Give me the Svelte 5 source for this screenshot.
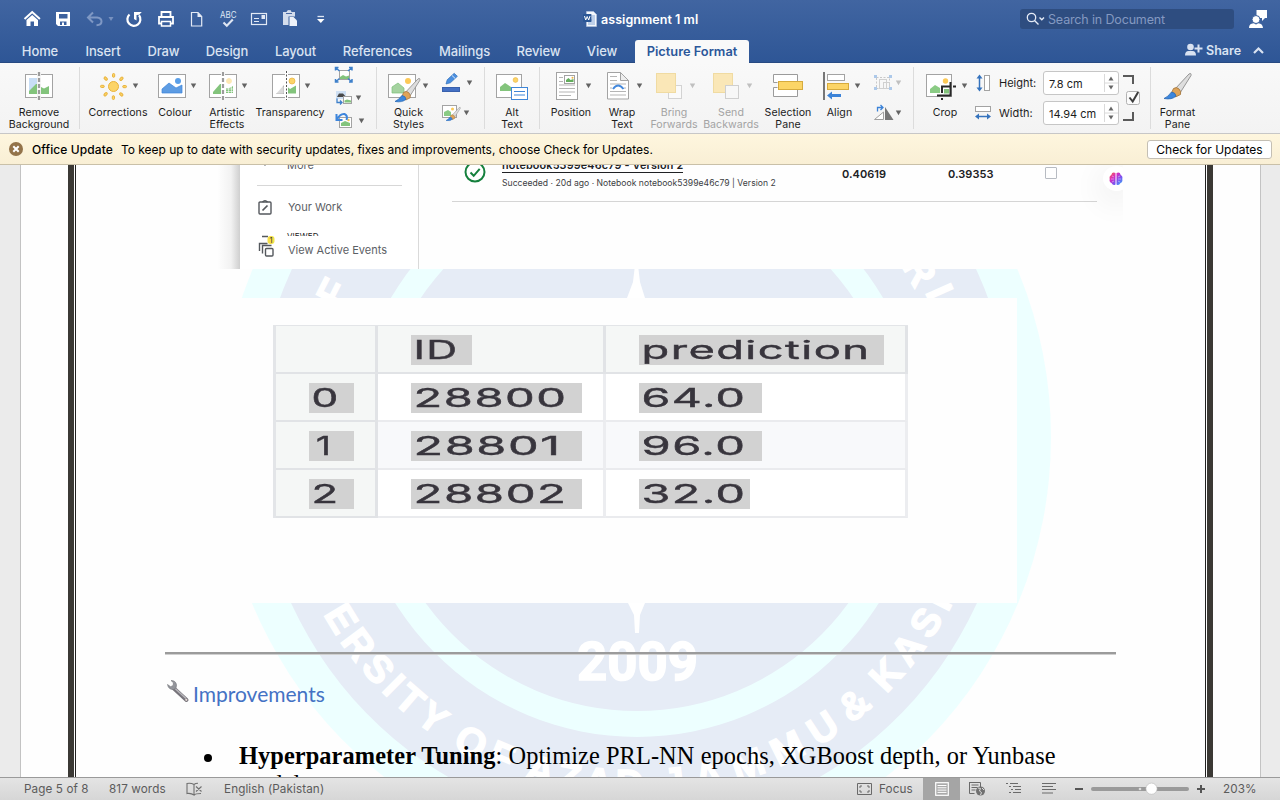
<script>
  const tabs = [
    ['Home', 36], ['Insert', 36], ['Draw', 31], ['Design', 42], ['Layout', 41],
    ['References', 69], ['Mailings', 51], ['Review', 43], ['View', 30]
  ];
  const rows = [
    [['', 0, 0], ['ID', 61, 45], ['prediction', 245, 229]],
    [['0', 45, 28], ['28800', 171, 154], ['64.0', 123, 105]],
    [['1', 45, 16], ['28801', 171, 148], ['96.0', 123, 105]],
    [['2', 45, 28], ['28802', 171, 154], ['32.0', 111, 105]]
  ];
</script>

{#snippet arrow(x, y, dim = false)}
  <path d="M{x - 2.7} {y - 2.4}h5.400l-2.700 4.600z" fill={dim ? '#c0c0c0' : '#636363'} />
{/snippet}

{#snippet frame(x, y, w, h)}
  <rect x={x + 0.5} y={y + 0.5} width={w - 1} height={h - 1} fill="#fff" stroke="#a3a3a3" />
{/snippet}

{#snippet brush(x, y, s)}
  <g transform="translate({x} {y}) scale({s})">
    <path d="M11 16L25 1q2.500-1.500 2 1.500L16 20z" fill="#dedede" stroke="#8b8b8b" stroke-width=".9" />
    <path d="M9.500 15.500q3-2 5.500.5t1.500 5.500l-5 2.500-4-4z" fill="#dfa458" stroke="#a77a43" stroke-width=".9" />
    <path d="M7.500 19q4 .5 4.500 4-4 4-12 2.500 4-1.500 7.500-6.500z" fill="#3b86dd" stroke="#2867b3" stroke-width=".8" />
  </g>
{/snippet}

{#snippet cell(x, w, lines, icon, dim = false)}
  <button class="cell" class:dim style:width="{w}px">
    <svg width={w} height="44" viewBox="{x} 63 {w} 44">{@render icon()}</svg>
    {#each lines as line}<span>{line}</span>{/each}
  </button>
{/snippet}

{#snippet tool(x, w, label, icon)}
  <button class="tool" aria-label={label} style:width="{w}px">
    <svg width={w} height="38" viewBox="{x} 0 {w} 38">{@render icon()}</svg>
  </button>
{/snippet}

{#snippet iHome()}
  <path d="M24.500 19l7.700-7 7.700 7" fill="none" stroke="#fff" stroke-width="2" />
  <path d="M26.500 20l5.700-5 5.800 5v6h-4v-4.500h-3.500V26h-4z" fill="#fff" />
{/snippet}
{#snippet iSave()}
  <path d="M56 12h14v14H58l-2-2zM59 14v4.500h8.500V14zM60 21.500V25h2v-2.500h2V25h2.500v-3.500z" fill="#fff" fill-rule="evenodd" />
{/snippet}
{#snippet iUndo()}
  <path d="M93 12.500L88 17.500l5 5M88.500 17.500h8.500q4.500.5 4.500 4t-5 3.700" fill="none" stroke="#7f98c4" stroke-width="2" />
  <path d="M108.500 17h5l-2.500 4z" fill="#7891bf" />
{/snippet}
{#snippet iRedo()}
  <path d="M129.500 14.500a6.500 6.500 0 1 0 9.500 .8" fill="none" stroke="#fff" stroke-width="2.200" />
  <path d="M134 12h7.800l-2.600 2.700-2.700.3v5.500l-2.500-1.500z" fill="#fff" />
{/snippet}
{#snippet iPrint()}
  <path d="M161.500 17v-5h9v5M161.500 23.500H159v-6.500h14v6.500h-2.500" fill="none" stroke="#fff" stroke-width="1.800" />
  <path d="M161.500 21.500h9V26h-9z" fill="none" stroke="#fff" stroke-width="1.500" />
{/snippet}
{#snippet iDoc()}
  <path d="M191.500 12.500h6.500l3.700 4v9.500h-10.200z" fill="none" stroke="#e4eaf5" stroke-width="1.200" />
  <path d="M197.500 12v5h4.500z" fill="#e4eaf5" />
{/snippet}
{#snippet iAbc()}
  <text x="220" y="17.700" font-size="8.300" textLength="16.500" lengthAdjust="spacingAndGlyphs" fill="#dfe6f3">ABC</text>
  <path d="M223.500 22.500l3.300 3.300 6-6.300" fill="none" stroke="#dfe6f3" stroke-width="2.100" />
{/snippet}
{#snippet iMail()}
  <rect x="251.500" y="13.500" width="15" height="11" fill="none" stroke="#e2e9f5" stroke-width="1.200" />
  <path d="M254 18.500h5M254 21.500h5" stroke="#e2e9f5" />
  <path d="M261.500 15h3.500v4h-3.500z" fill="#e2e9f5" />
{/snippet}
{#snippet iPaste()}
  <path d="M283 12h3.500q1-2.500 3-1.800 1.500-.5 2 1.800H295v4.500h-6.500V25H283z" fill="#d4ddec" />
  <path d="M286 13.500h6" stroke="#4a69a2" />
  <path d="M289.500 17h4l3.500 3.500V26h-7.500z" fill="#eef2f9" />
{/snippet}
{#snippet iMore()}
  <path d="M317.500 16.500h6.500" stroke="#dfe6f3" stroke-width="1.300" /><path d="M317 19h7.500l-3.700 4z" fill="#fff" />
{/snippet}

{#snippet rRemove()}
  {@render frame(25, 74, 28, 24)}
  <path d="M29 78h8.500v8.500l-8.500 7z" fill="#c8def6" />
  <path d="M29 94v-3l7-7h2v10zM41 87l3 1.500 5-2.500v8h-8z" fill="#83c47c" />
  <path d="M39 72v28" stroke="#f6f6f6" stroke-width="4" /><path d="M39 72v28" stroke="#9c9c9c" stroke-width="2.200" stroke-dasharray="4 2" />
{/snippet}
{#snippet rCorrect()}
  <circle cx="113.500" cy="86.500" r="5" fill="#fcd468" stroke="#e9b33c" />
  {#each [0, 45, 90, 135, 180, 225, 270, 315] as a}
    <rect x="112.500" y="73.500" width="2.200" height="3.800" rx="1.100" fill="#fcd468" stroke="#e9b33c" transform="rotate({a} 113.500 86.500)" />
  {/each}
  {@render arrow(135.500, 86)}
{/snippet}
{#snippet rColour()}
  {@render frame(158, 74, 28, 24)}
  <path d="M162 93v-4l7-6 7 5 6-3v8z" fill="#5d9ce3" stroke="#3d85da" stroke-width=".7" /><circle cx="178" cy="81" r="3" fill="#5a9fe8" />
  {@render arrow(193.500, 86)}
{/snippet}
{#snippet rArtistic()}
  {@render frame(209, 74, 28, 24)}
  <path d="M213 94v-2l7-8h1.500v10z" fill="#83c47c" />
  <path d="M226 88q3 1 7-2v7h-7z" fill="#83c47c" /><path d="M225 89h9m-9 2.500h9M228.500 85v9m3-9v9" stroke="#fff" stroke-width=".6" />
  <circle cx="229" cy="81" r="2.700" fill="#fcd77a" /><path d="M226 80h6m-6 2h6M228 78v6m2-6v6" stroke="#fff" stroke-width=".5" />
  <path d="M223 72v28" stroke="#fff" stroke-width="4" /><path d="M223 72v28" stroke="#9c9c9c" stroke-width="2.200" stroke-dasharray="4 2" />
  {@render arrow(244.500, 86)}
{/snippet}
{#snippet rTrans()}
  {@render frame(272, 74, 28, 24)}
  <path d="M276 94l8-9v9z" fill="#b5b5b5" /><path d="M278 94v-3m2 3v-5m2 5v-8M276 92h8m-8-2h8m-8-2h8" stroke="#fff" stroke-width=".6" />
  <path d="M287.500 87l2.500 2 6-3.500v8h-8.500z" fill="#83c47c" /><circle cx="292" cy="81" r="3" fill="#fcd468" stroke="#e9b33c" stroke-width=".7" />
  <path d="M286.500 71v29" stroke="#fff" stroke-width="3" /><path d="M286.500 71v29" stroke="#555" stroke-width="1" stroke-dasharray="2 1.500" />
  {@render arrow(307.500, 86)}
{/snippet}
{#snippet rQuick()}
  {@render frame(388, 74, 28, 24)}
  <path d="M392 93v-6l6-4 6 5v5z" fill="#a5d3a0" stroke="#7dbf78" stroke-width=".7" /><circle cx="408" cy="81" r="3" fill="#fcc957" />
  {@render brush(395, 78, 0.92)}
  {@render arrow(425.500, 86)}
{/snippet}
{#snippet rAlt()}
  {@render frame(496, 74, 26, 24)}
  <path d="M500 91v-4l5-4 6 4v4z" fill="#83c47c" /><circle cx="515.500" cy="80" r="2.400" fill="#fcd468" stroke="#e9b33c" stroke-width=".6" />
  <rect x="511.500" y="87.500" width="16" height="12" fill="#fff" stroke="#3e86d8" /><path d="M514 91.500h11m-11 3.500h11" stroke="#3e86d8" />
{/snippet}
{#snippet rPosition()}
  {@render frame(556, 72, 22, 28)}
  <path d="M559 77.500h4m-4 4h4m-4 3.500h16m-16 3.500h16m-16 3.500h16m-16 3.500h12" stroke="#b5b5b5" />
  <rect x="564.500" y="75.500" width="10" height="8" fill="#fff" stroke="#a3a3a3" /><path d="M566 82v-2l2.500-2 2 2 3-1v3z" fill="#62ad5c" /><circle cx="572.500" cy="77.700" r="1" fill="#f3b73f" />
  {@render arrow(588.500, 86)}
{/snippet}
{#snippet rWrap()}
  <path d="M607.500 72.500h13l8 8v18.500h-21z" fill="#fff" stroke="#a3a3a3" /><path d="M620.500 72.500v8h8z" fill="#eee" stroke="#a3a3a3" />
  <path d="M610 76.500h7m-7 4h7m-7 3.500h16m-16 4h2m12 0h2m-16 3.500h16m-16 3.500h16" stroke="#b5b5b5" />
  <path d="M613 89q5-7 10.500 0" fill="none" stroke="#4388dc" stroke-width="2" />
  {@render arrow(639.500, 86)}
{/snippet}
{#snippet rBring()}
  <rect x="668.500" y="85.500" width="13" height="13" fill="#fafafa" stroke="#d3d3d3" />
  <rect x="656.500" y="73.500" width="19" height="19" fill="#fae7b7" stroke="#f0dba2" />
  {@render arrow(692.500, 86, true)}
{/snippet}
{#snippet rSend()}
  <rect x="713.500" y="73.500" width="19" height="19" fill="#fae7b7" stroke="#f0dba2" />
  <rect x="725.500" y="85.500" width="13" height="13" fill="#f7f7f7" stroke="#cfcfcf" />
  {@render arrow(749.500, 86, true)}
{/snippet}
{#snippet rSelect()}
  <path d="M773.500 80v-5.500h24V96.500h-24V90" fill="#fff" stroke="#9b9b9b" />
  <path d="M772.500 82.500h5v5h-5z" fill="#f7f7f7" /><path d="M773.500 80v2.500h4M773.500 90v-2.500h4" fill="none" stroke="#9b9b9b" />
  <path d="M796 82h3v7h-3z" fill="#f7f7f7" />
  <rect x="778.500" y="81.500" width="24" height="8" fill="#fcd567" stroke="#d6ab3e" />
{/snippet}
{#snippet rAlign()}
  <path d="M824 72v28" stroke="#777" stroke-width="2" />
  <rect x="827.500" y="74.500" width="17" height="6" fill="#fff" stroke="#a3a3a3" />
  <rect x="827.500" y="83.500" width="21" height="6" fill="#fcd567" stroke="#d6ab3e" />
  <path d="M827 95.500l5-4v2.500h9v3h-9v2.500z" fill="#3c83d8" />
  {@render arrow(857.500, 86)}
{/snippet}
{#snippet rCrop()}
  {@render frame(926, 74, 26, 23)}
  <path d="M930 93v-4l5-4 5 3v5z" fill="#8acb84" /><circle cx="945.500" cy="81" r="2.700" fill="#fcc957" />
  <path d="M941.500 95.500v-8.500H951v9z" fill="#fff" /><path d="M944 89h5v4.500h-5z" fill="#83c47c" />
  <path d="M942 93v-6.500h9M937 95.500h13.500V82M953 86.500h3M942 98v2" fill="none" stroke="#292929" stroke-width="2" />
  {@render arrow(964.500, 86)}
{/snippet}
{#snippet rFormat()}{@render brush(1164, 73, 1)}{/snippet}

<div class="app">
  <header>
    <div class="titlebar">
      {@render tool(20, 28, 'Home', iHome)}
      {@render tool(48, 30, 'Save', iSave)}
      {@render tool(78, 42, 'Undo', iUndo)}
      {@render tool(120, 30, 'Redo', iRedo)}
      {@render tool(150, 31, 'Print', iPrint)}
      {@render tool(181, 31, 'New', iDoc)}
      {@render tool(212, 31, 'Spelling', iAbc)}
      {@render tool(243, 32, 'Mail', iMail)}
      {@render tool(275, 30, 'Paste', iPaste)}
      {@render tool(305, 32, 'More', iMore)}
      <div class="title">
        <svg width="14" height="16" viewBox="0 0 14 16"><path d="M3.500.5h7l3 3v12h-10z" fill="#f4f7fc" stroke="#b9c8e2" stroke-width=".6" /><path d="M5 9h7m-7 2h7m-7 2h7M9 5h3m-3 2h3" stroke="#6c94cf" stroke-width=".8" /><rect y="3" width="8.500" height="8" rx=".8" fill="#2b5797" /><path d="M1.500 5l1.200 4L4.200 5.500 5.700 9 7 5" fill="none" stroke="#fff" stroke-width="1" /></svg>
        <b>assignment 1 ml</b>
      </div>
      <div class="search">
        <svg width="20" height="14" viewBox="0 0 20 14"><circle cx="5.500" cy="5.500" r="4.200" fill="none" stroke="#e5ebf6" stroke-width="1.300" /><path d="M8.500 8.500l4 4M13.500 5.500l2.300 2.200L18 5.500" fill="none" stroke="#e5ebf6" stroke-width="1.400" /></svg>
        <span>Search in Document</span>
      </div>
      <svg class="contact" width="19" height="20" viewBox="1249 9 19 20"><path d="M1256.500 10h10.500v8h-2l-3 3v-3h-5.500z" fill="#fff" /><circle cx="1256" cy="19.500" r="4" fill="#fff" stroke="#3b609d" /><path d="M1249 28q0-4.500 4.500-4.800l2.500 1.300 2.500-1.300q4 .3 4.500 4.800z" fill="#fff" /></svg>
    </div>
    <nav>
      {#each tabs as [name, w]}<span class="tab" style:width="{w}px">{name}</span>{/each}
      <span class="active">Picture Format</span>
      <span class="share">
        <svg width="18" height="14" viewBox="0 0 18 14"><circle cx="5.500" cy="4" r="3.300" fill="#d9e2f1" /><path d="M0 12.500Q0 8 3.500 8h4Q11 8 11 12.500z" fill="#d9e2f1" /><path d="M13.500 1.500v8M9.500 5.500h8" stroke="#d9e2f1" stroke-width="2" /></svg>
        <b>Share</b>
        <svg class="chev" width="11" height="7" viewBox="0 0 11 7"><path d="M1 6l4.500-4.500L10 6" fill="none" stroke="#d9e2f1" stroke-width="2.200" /></svg>
      </span>
    </nav>
  </header>

  <section class="ribbon">
    {@render cell(0, 78, ['Remove', 'Background'], rRemove)}
    <i class="sep"></i>
    {@render cell(80, 76, ['Corrections'], rCorrect)}
    {@render cell(156, 38, ['Colour'], rColour)}
    {@render cell(194, 66, ['Artistic', 'Effects'], rArtistic)}
    {@render cell(260, 60, ['Transparency'], rTrans)}
    <svg class="stack" width="56" height="70" viewBox="320 63 56 70">
      {@render frame(339, 70, 11, 10)}
      <path d="M340 79v-2l3-2 3 1.500 3-1v3.500z" fill="#83c47c" />
      <path d="M335.500 67.500l4 3.500m12.500-3.500l-4 3.500m-12.500 11l4-3.500M352 82l-4-3.500M335.500 70.500v-3h3M349 67.500h3v3M335.500 79v3h3M349 82h3v-3" fill="none" stroke="#3e80ca" stroke-width="1.500" />
      <rect x="336" y="91" width="10" height="8" fill="#cfe0f3" /><path d="M337 97l2-3.500h4l3 3.500z" fill="#494949" /><path d="M337 98.500v4h5m-2-2l2 2-2 2" fill="none" stroke="#3e80ca" stroke-width="1.300" />
      {@render frame(343, 96, 9, 8)}<path d="M344.500 102.500v-2l2.500-1 4 1v2z" fill="#83c47c" />
      {@render arrow(358.500, 98)}
      {@render frame(339, 117, 13, 11)}<path d="M341 126v-3l4-2 5 2v3z" fill="#83c47c" /><circle cx="348.500" cy="120" r="1.200" fill="#f6c24d" />
      <path d="M336.500 114v6h6M337 119.500q3-6 7.500-5.500 3.500 1.500 2 6" fill="none" stroke="#3e86dc" stroke-width="2" />
      {@render arrow(361.500, 121)}
    </svg>
    <i class="sep"></i>
    {@render cell(377, 63, ['Quick', 'Styles'], rQuick)}
    <svg class="stack" width="44" height="70" viewBox="440 63 44 70">
      <rect x="442.500" y="87.500" width="17" height="4" fill="#4470c4" stroke="#3961ad" />
      <path d="M446 84l1.200-4.200 7-6.500 3.200 3-7 6.500z" fill="#4b8fdf" stroke="#3471ba" stroke-width=".7" /><path d="M452 75.500l3.200 3" stroke="#fff" stroke-width=".8" />
      {@render arrow(469.500, 83)}
      {@render frame(442, 105, 15, 13)}<path d="M444 116v-4l4-2 3 2v4z" fill="#8acb84" /><circle cx="452.500" cy="109" r="1.500" fill="#fcc957" />
      {@render brush(446, 107, 0.53)}
      {@render arrow(466.500, 113)}
    </svg>
    <i class="sep"></i>
    {@render cell(485, 54, ['Alt', 'Text'], rAlt)}
    <i class="sep"></i>
    {@render cell(540, 62, ['Position'], rPosition)}
    {@render cell(602, 40, ['Wrap', 'Text'], rWrap)}
    {@render cell(642, 64, ['Bring', 'Forwards'], rBring, true)}
    {@render cell(706, 50, ['Send', 'Backwards'], rSend, true)}
    {@render cell(756, 64, ['Selection', 'Pane'], rSelect)}
    {@render cell(820, 39, ['Align'], rAlign)}
    <svg class="stack" width="54" height="70" viewBox="859 63 54 70">
      <rect x="876.500" y="77.500" width="13" height="11" fill="none" stroke="#c9c9c9" stroke-dasharray="2 1.500" /><rect x="879.500" y="79.500" width="7" height="9" fill="none" stroke="#d0d0d0" /><rect x="883.500" y="82.500" width="6" height="6" fill="none" stroke="#d0d0d0" />
      <path d="M874 75h3v3h-3zm15 0h3v3h-3zm-15 12h3v3h-3zm15 0h3v3h-3z" fill="#adc9ea" />
      {@render arrow(898.500, 83, true)}
      <path d="M874.500 119.500l9-7.500v7.500z" fill="#fff" stroke="#a0a0a0" /><path d="M885 107l8.500 13H885z" fill="#777" />
      <path d="M877.500 111.500v-4h5m-2-2.500l2.500 2.500-2.500 2.500" fill="none" stroke="#3c83d8" stroke-width="1.300" />
      {@render arrow(898.500, 113)}
    </svg>
    <i class="sep"></i>
    {@render cell(914, 62, ['Crop'], rCrop)}
    <div class="size">
      <svg width="18" height="18" viewBox="974 74 18 18"><rect x="984.500" y="75.500" width="5" height="15" fill="#fff" stroke="#a3a3a3" /><path d="M979.500 77v12" stroke="#3573bd" stroke-width="1.500" /><path d="M976.500 78.500l3-4 3 4zm0 9l3 4 3-4z" fill="#3573bd" /></svg>
      <span>Height:</span>
      <div class="field"><em>7.8 cm</em><svg width="14" height="22" viewBox="0 0 14 22"><path d="M.5 2v18M1 11h13" stroke="#dadada" /><path d="M4.500 8.500h5L7 4.500zm0 5h5L7 17.500z" fill="#666" /></svg></div>
      <svg width="18" height="18" viewBox="974 104 18 18"><rect x="975.500" y="106.500" width="15" height="5" fill="#fff" stroke="#a3a3a3" /><path d="M977 116.500h12" stroke="#3573bd" stroke-width="1.500" /><path d="M979 113.500l-4 3 4 3zm8 0l4 3-4 3z" fill="#3573bd" /></svg>
      <span>Width:</span>
      <div class="field"><em>14.94 cm</em><svg width="14" height="22" viewBox="0 0 14 22"><path d="M.5 2v18M1 11h13" stroke="#dadada" /><path d="M4.500 8.500h5L7 4.500zm0 5h5L7 17.500z" fill="#666" /></svg></div>
    </div>
    <svg class="stack" width="32" height="70" viewBox="1118 63 32 70">
      <path d="M1123 76h10v8M1123 120h10v-8" fill="none" stroke="#5a5a5a" stroke-width="2" />
      <rect x="1126.500" y="91.500" width="13" height="13" rx="2" fill="#fbfbfb" stroke="#b3b3b3" /><path d="M1129.500 97.500l3.200 4 5.500-9.500" fill="none" stroke="#3d3d3d" stroke-width="2" />
    </svg>
    <i class="sep"></i>
    {@render cell(1151, 53, ['Format', 'Pane'], rFormat)}
  </section>

  <section class="notice">
    <svg width="14" height="14" viewBox="0 0 14 14"><circle cx="7" cy="7" r="7" fill="#93734a" /><path d="M4.300 4.300l5.400 5.400m0-5.400L4.300 9.700" stroke="#fff" stroke-width="2" /></svg>
    <b>Office Update</b>
    <span>To keep up to date with security updates, fixes and improvements, choose Check for Updates.</span>
    <button>Check for Updates</button>
  </section>

  <main>
    <div class="page">
      <svg class="watermark" width="840" height="612" viewBox="215 165 840 612">
        <ellipse cx="635" cy="437" rx="416" ry="426" fill="#edffff" />
        <ellipse cx="634" cy="437" rx="379" ry="390" fill="#e6ecf6" />
        <ellipse cx="637" cy="447" rx="287" ry="290" fill="#edffff" />
        <ellipse cx="637" cy="447" rx="262" ry="264" fill="#e6ecf6" />
        <path id="lower" d="M278 440A357 357 0 0 0 992 440" fill="none" />
        <g class="ring">
          <text><textPath href="#lower" startOffset="182" textLength="167">ERSITY</textPath></text>
          <text><textPath href="#lower" startOffset="368" textLength="62">OF</textPath></text>
          <text><textPath href="#lower" startOffset="447" textLength="122">AZAD</textPath></text>
          <text><textPath href="#lower" startOffset="590" textLength="191">JAMMU</textPath></text>
          <text><textPath href="#lower" startOffset="793">&amp;</textPath></text>
          <text><textPath href="#lower" startOffset="839" textLength="130">KASH</textPath></text>
          <text transform="translate(339 309) rotate(-63)">F</text>
          <text transform="translate(901 265) rotate(60)">R</text>
          <text transform="translate(925 292) rotate(66)">I</text>
        </g>
        <text class="year" x="577" y="680" textLength="121" lengthAdjust="spacingAndGlyphs">2009</text>
        <path d="M628 603h17l-5 12-1 18h-4l-1-18zM627 298l6-16 2-17h3l2 17 5 16z" fill="#fff" />
      </svg>

      <div class="shot">
        <div class="shade"></div>
        <aside>
          <div class="more"><svg width="8" height="6" viewBox="0 0 8 6"><path d="M1 1l3 3 3-3" fill="none" stroke="#5f6368" stroke-width="1.300" /></svg><span>More</span></div>
          <div class="item"><svg width="14" height="15" viewBox="0 0 14 15"><rect x="1" y="2" width="12" height="12" rx="1" fill="none" stroke="#54585d" stroke-width="1.400" /><path d="M4.500 2q2.500-2.500 5 0M4.500 10.500l5-5" fill="none" stroke="#54585d" stroke-width="1.700" /></svg><span>Your Work</span></div>
          <div class="viewed"><span>VIEWED</span></div>
          <div class="item events"><svg width="17" height="24" viewBox="257 232 17 24"><path d="M261 235.500h6M258.500 250v-7.500h8M261.500 252.500v-8h9" fill="none" stroke="#54585d" stroke-width="1.400" /><rect x="264.500" y="247.500" width="7.500" height="7.500" rx="1" fill="#fff" stroke="#54585d" stroke-width="1.400" /><rect x="266.500" y="235" width="7" height="8" rx="3" fill="#f6e04a" /><text x="268.500" y="242" font-size="7.500" fill="#333">1</text></svg><span>View Active Events</span></div>
        </aside>
        <div class="run">
          <svg width="22" height="22" viewBox="0 0 22 22"><circle cx="11" cy="11" r="9.500" fill="#fff" stroke="#15803d" stroke-width="2" /><path d="M6.500 11.500l3.200 3.300 6-7" fill="none" stroke="#15803d" stroke-width="2" /></svg>
          <div class="names"><b>notebook5399e46c79 - Version 2</b><small>Succeeded · 20d ago · Notebook notebook5399e46c79 | Version 2</small></div>
          <strong class="private">0.40619</strong>
          <strong class="public">0.39353</strong>
          <i class="check"></i>
        </div>
        <div class="assist"><svg width="14" height="14" viewBox="0 0 14 14"><defs><linearGradient id="brain" x1="0" y1="0" x2="1" y2="1"><stop offset="0" stop-color="#ff6a3d" /><stop offset=".35" stop-color="#d52bc4" /><stop offset=".65" stop-color="#7557f3" /><stop offset="1" stop-color="#39b6f2" /></linearGradient></defs><path d="M6.500 1Q3-.5 2.300 3 0 4 .7 7 0 10 2.500 11q1.500 3 4 1.500zM7.500 1Q11-.5 11.700 3 14 4 13.300 7q.7 3-1.800 4-1.500 3-4 1.500z" fill="url(#brain)" /><path d="M2 7h3M3 4l2 1M3 10l2-1m7-2H9m2-3L9 5m2 5L9 9" stroke="#fff" stroke-width=".6" opacity=".7" /></svg></div>
      </div>

      <div class="figure">
        <div class="table">
          {#each rows as row, r}
            {#each row as [text, box, len], c}
              <div class="td" class:head={r === 0 || c === 0} class:odd={r === 2} class:first={c === 0}>
                {#if text}
                  <svg style:width="{box}px" height="30"><text x={text === '1' ? 7 : 2.5} y="24" textLength={len} lengthAdjust="spacingAndGlyphs">{text}</text></svg>
                {/if}
              </div>
            {/each}
          {/each}
        </div>
      </div>

      <hr />
      <h2>
        <svg width="24" height="25" viewBox="0 0 24 25"><path d="M8 9.500L20.500 21" stroke="#77747b" stroke-width="4" stroke-linecap="round" /><path d="M8 8.500L20 19.500" stroke="#b8b7bb" stroke-width="1.300" /><path d="M5 1.500q5 0 5.500 4.500.3 4-3 4.500-5 .3-6-5l3.200 2.200 2.500-1.300.2-2.600z" fill="#93959b" stroke="#74757b" stroke-width=".6" /><circle cx="20.300" cy="20.800" r="1.100" fill="#e8dcd7" /></svg>
        <span>Improvements</span>
      </h2>
      <ul><li><b>Hyperparameter Tuning</b>: Optimize PRL-NN epochs, XGBoost depth, or Yunbase<br />models</li></ul>
    </div>
  </main>

  <footer>
    <span class="pages">Page 5 of 8</span>
    <span class="words">817 words</span>
    <svg class="book" width="17" height="14" viewBox="0 0 17 14"><path d="M8 2.500Q5 .8 1 1.500v10q4-.7 7 1.500V2.500Q9.500 1.300 12 1.300M8 13q1.500-1.500 7-1.500M10 4.500l5.500 5m0-5l-5.500 5" fill="none" stroke="#707070" stroke-width="1.100" /></svg>
    <span class="lang">English (Pakistan)</span>
    <svg class="focus" width="15" height="12" viewBox="0 0 15 12"><path d="M.5.5h14v11H.5z" fill="none" stroke="#6a6a6a" /><path d="M3 5V3h2m5 0h2v2m0 2v2h-2M5 9H3V7" fill="none" stroke="#6a6a6a" /></svg>
    <span class="flabel">Focus</span>
    <div class="view"><svg width="14" height="14" viewBox="0 0 14 14"><rect x=".7" y=".7" width="12.600" height="12.600" fill="#aaa" stroke="#fff" stroke-width="1.200" /><path d="M2.500 3.500h9m-9 2.300h9m-9 2.300h9m-9 2.300h9" stroke="#fff" /></svg></div>
    <svg width="160" height="22" viewBox="960 778 160 22">
      <path d="M969.500 782.500h11v5M969.500 782v11.500h5M971.500 785h7m-7 2.500h6m-6 2.500h4" fill="none" stroke="#6a6a6a" /><circle cx="980.500" cy="791" r="4.500" fill="#707070" /><path d="M978 788l2.500.5-1 2.500 2 1.500-1 2.500m1.500-7l2 2" fill="none" stroke="#ddd" />
      <path d="M1006 783.500h2m2 0h8M1009 786.500h2m2 0h8M1011 789.500h2m2 0h6M1009 792.500h2m2 0h8" stroke="#6a6a6a" />
      <path d="M1042 783.500h14m-14 3h11m-11 3h14m-14 3.500h11" stroke="#6a6a6a" stroke-width="1.100" />
      <path d="M1075 789h8" stroke="#555" stroke-width="2" />
      <path d="M1093 789h27" stroke="#9a9a9a" stroke-width="4" stroke-linecap="round" />
    </svg>
    <svg width="90" height="22" viewBox="1120 778 90 22"><path d="M1118 789h69" stroke="#9a9a9a" stroke-width="4" stroke-linecap="round" /><circle cx="1140" cy="789" r="1.300" fill="#ddd" /><circle cx="1151.500" cy="788.700" r="5.600" fill="#fff" stroke="#b5b5b5" stroke-width=".6" /><path d="M1197 789h8m-4-4v8" stroke="#555" stroke-width="2" /></svg>
    <span class="zoom">203%</span>
  </footer>
</div>

<style>
  :global(body) { margin: 0; overflow: hidden; }
  .app { width: 1280px; height: 800px; display: flex; flex-direction: column; overflow: hidden; font-family: Inter, "Liberation Sans", sans-serif; color: #1c1c1c; }
  svg { display: block; flex: none; overflow: visible; }
  button { font: inherit; color: inherit; border: 0; background: none; padding: 0; }
  header { height: 62px; background: linear-gradient(#4165a1, #2e5696); border-bottom: 1px solid #284a82; flex: none; }
  .titlebar { height: 38px; display: flex; align-items: center; padding-left: 20px; }
  .tool { flex: none; }
  .title { display: flex; align-items: center; gap: 4px; margin-left: 246px; width: 437px; color: #fff; font-size: 12.500px; letter-spacing: .05px; }
  .title b { font-weight: 600; white-space: nowrap; }
  .search { width: 208px; height: 20px; padding-left: 6px; border-radius: 3px; background: #2e4d80; display: flex; align-items: center; gap: 2px; color: #8499c1; font-size: 12.500px; letter-spacing: -.15px; }
  .contact { margin-left: 15px; }
  nav { height: 24px; display: flex; padding-left: 22px; color: #dae3f2; font-size: 13px; font-weight: 500; line-height: 27px; }
  .tab { margin-right: 27px; flex: none; white-space: nowrap; display: flex; justify-content: center; letter-spacing: -.1px; }
  .active { width: 114px; margin-left: -9px; margin-top: 2px; height: 23px; line-height: 23px; border-radius: 3px 3px 0 0; background: #f9f9f9; color: #2b579a; font-weight: 600; font-size: 12.800px; text-align: center; letter-spacing: 0; white-space: nowrap; }
  .share { margin-left: 436px; display: flex; align-items: center; height: 24px; }
  .share b { font-weight: 600; font-size: 12.500px; margin-left: 3px; width: 36px; }
  .chev { margin-left: 11px; }
  .ribbon { height: 70px; flex: none; display: flex; background: linear-gradient(#f9f9f9, #f3f3f3); border-bottom: 1px solid #c7c7c7; font-size: 10.600px; }
  .cell { display: flex; flex-direction: column; align-items: center; flex: none; line-height: 12px; letter-spacing: .05px; }
  .cell span { white-space: nowrap; }
  .cell.dim { color: #a3a3a3; }
  .sep { width: 1px; height: 62px; margin: 4px 0 0; background: #dcdcdc; flex: none; }
  .cell:first-child { margin-right: 1px; }
  .size { display: grid; grid-template-columns: 18px 45px 76px; grid-template-rows: 24px 24px; gap: 6px 3px; align-items: center; padding-top: 8px; width: 144px; flex: none; height: 54px; margin-left: -2px; font-size: 11px; }
  .size span { padding-left: 4px; }
  .field { height: 22px; width: 74px; background: #fff; border: 1px solid #c6c6c6; border-radius: 3px; display: flex; justify-content: space-between; align-items: center; }
  .field em { font-style: normal; padding-left: 5px; padding-top: 1px; }
  .notice { height: 30px; flex: none; display: flex; align-items: center; padding: 0 8px 0 9px; background: linear-gradient(#fef6de, #f9efd5); border-bottom: 1px solid #c9c0a8; font-size: 12px; color: #000; }
  .notice b { font-weight: 500; margin-left: 9px; width: 81px; white-space: nowrap; letter-spacing: .1px; }
  .notice span { margin-left: 8px; flex: 1; white-space: nowrap; letter-spacing: -.03px; }
  .notice button { width: 125px; height: 19px; border: 1px solid #c4bfb4; border-radius: 3px; background: #fff; }
  main { height: 612px; flex: none; background: #ebebeb; padding-left: 20px; overflow: hidden; }
  .page { position: relative; width: 1239px; height: 700px; border: solid #c3c3c3; border-width: 0 1px; background:
    linear-gradient(#3b3935, #3b3935) 47px 0 / 6px 100% no-repeat,
    linear-gradient(#222, #222) 54px 0 / 1px 100% no-repeat,
    linear-gradient(#222, #222) 1184px 0 / 1px 100% no-repeat,
    linear-gradient(#3b3935, #3b3935) 1186px 0 / 6px 100% no-repeat, #fefefe; }
  .watermark { position: absolute; left: 194px; top: 0; }
  .ring { font: bold 39px "Liberation Sans", Arial, sans-serif; fill: #fff; stroke: #fff; stroke-width: 1.500px; }
  .year { font: bold 53px Roboto, sans-serif; fill: #fff; stroke: #fff; stroke-width: 1.500px; }
  .shot { position: relative; display: flex; height: 104px; width: 958px; margin-left: 144px; background: #fefefe; overflow: hidden; }
  .shade { width: 75px; background: linear-gradient(90deg, transparent 70%, #f2f2f2 88%, #cfcfcf); }
  aside { width: 178px; border-right: 1px solid #dadada; background: #fff; color: #5c6065; font-size: 11px; flex: none; }
  .more { display: flex; height: 20px; margin: 0 16px 0 17px; border-bottom: 1px solid #d7d7d7; }
  .more svg { margin: -4px 21px 0 4px; }
  .more span { margin-top: -7px; margin-left: -3px; }
  .item { display: flex; align-items: center; height: 42px; padding-left: 18px; gap: 16px; white-space: nowrap; }
  .viewed { height: 8px; overflow: hidden; padding-left: 47px; font-size: 8px; line-height: 10px; letter-spacing: .1px; }
  .viewed span { display: block; margin-top: 3px; color: #222; }
  .events { height: 28px; padding-left: 18px; gap: 13px; }
  .events svg { margin-top: -11px; }
  .run { display: flex; width: 645px; height: 36px; margin-left: 33px; border-bottom: 1px solid #d5d5d5; color: #202124; }
  .run > svg { margin: -4px 0 0 12px; }
  .names { width: 340px; margin: -6px 0 0 16px; display: flex; flex-direction: column; align-items: flex-start; white-space: nowrap; }
  .names b { font-size: 10.800px; line-height: 13px; font-weight: 600; border-bottom: 1px solid #202124; letter-spacing: .17px; }
  .names small { font-size: 8.600px; color: #3c4043; margin-top: 4px; line-height: 12px; letter-spacing: .02px; }
  strong { font-size: 11px; font-weight: 600; margin-top: 2px; letter-spacing: .05px; }
  .private { width: 106px; }
  .public { width: 97px; }
  .check { width: 10px; height: 10px; border: 1px solid #b7bbc2; border-radius: 1px; margin-top: 2px; }
  .assist { position: absolute; right: -7px; top: 1px; width: 27px; height: 25px; border-radius: 50%; background: #fff; box-shadow: 0 8px 28px 8px rgba(0,0,0,.045); }
  .assist svg { margin: 6px 0 0 6px; }
  .figure { position: relative; margin: 29px 0 0 144px; width: 852px; height: 278px; padding-top: 27px; background: #fefefe; }
  .table { display: grid; grid-template-columns: 102px 228px 302px; grid-template-rows: repeat(4, 48px); margin-left: 108px; width: 632px; border: solid #e3e5e8; border-width: 1px 0 0 3px; }
  .td { display: flex; padding: 9px 0 0 33px; border-right: 3px solid #ecedf0; border-bottom: 2px solid #eaebee; box-sizing: border-box; background: #fff; }
  .td.odd { background: #f8f9fb; }
  .td.head { background: #f5f7f6; border-color: #e1e3e6; }
  .td svg { background: #d2d2d2; height: 30px; filter: blur(.5px); }
  .td text { font: 400 25px Inter, sans-serif; letter-spacing: .8px; fill: #38353d; stroke: #38353d; stroke-width: .4px; }
  hr { position: relative; width: 951px; height: 0; margin: 49px 0 0 144px; border: solid; border-color: #9b9b9b #d0d0d0 #d0d0d0; border-width: 2px 0 1px; }
  h2 { position: relative; display: flex; margin: 24px 0 0 145px; height: 35px; font: 400 21px Lato, Carlito, sans-serif; color: #4472c4; }
  h2 span { margin: 2px 0 0 3px; }
  ul { position: relative; margin: 28px 0 0 218px; padding: 0; font: 24.360px/28px "Liberation Serif", serif; letter-spacing: .085px; color: #000; white-space: nowrap; list-style: none; }
  li::before { content: ""; position: absolute; left: -35px; top: 12px; width: 8px; height: 8px; border-radius: 50%; background: #000; }
  footer { height: 22px; border-top: 1px solid #9a9a9a; background: linear-gradient(#e4e4e4, #d6d6d6); display: flex; align-items: center; flex: none; font-size: 11.700px; letter-spacing: .1px; color: #5b5b5b; white-space: nowrap; }
  .pages { margin-left: 24px; width: 85px; }
  .words { width: 77px; }
  .lang { margin-left: 21px; width: 633px; }
  .flabel { margin-left: 7px; width: 44px; }
  .view { width: 37px; height: 22px; background: #a5a5a5; display: flex; align-items: center; justify-content: center; }
  .zoom { margin-left: 13px; }
</style>
